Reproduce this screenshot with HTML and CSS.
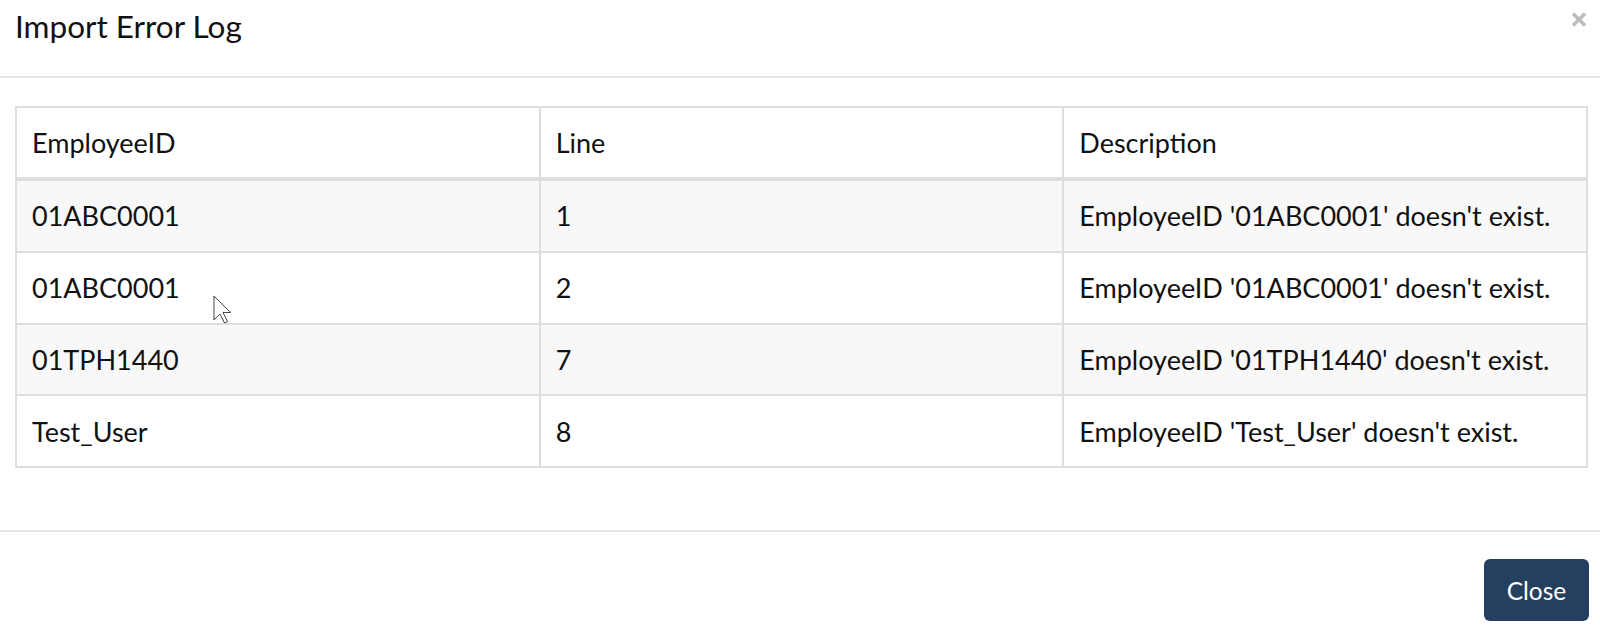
FILE: index.html
```html
<!DOCTYPE html>
<html lang="en">
<head>
<meta charset="utf-8">
<title>Import Error Log</title>
<link rel="stylesheet" href="styles.css">
</head>
<body>
<div class="modal">
  <div class="modal-header">
    <h4 class="modal-title">Import Error Log</h4>
    <button class="close" aria-label="Close">
      <svg width="16" height="15" viewBox="0 0 16 15"><path d="M2 1.5 L14 13.5 M14 1.5 L2 13.5" stroke="#bdbdbd" stroke-width="3.6" fill="none"/></svg>
    </button>
  </div>
  <div class="modal-body">
    <table class="grid">
      <colgroup><col class="c"><col class="c"><col class="c"></colgroup>
      <thead>
        <tr><th>EmployeeID</th><th>Line</th><th>Description</th></tr>
      </thead>
      <tbody>
        <tr class="odd"><td>01ABC0001</td><td>1</td><td>EmployeeID '01ABC0001' doesn't exist.</td></tr>
        <tr><td>01ABC0001</td><td>2</td><td>EmployeeID '01ABC0001' doesn't exist.</td></tr>
        <tr class="odd"><td>01TPH1440</td><td>7</td><td>EmployeeID '01TPH1440' doesn't exist.</td></tr>
        <tr><td>Test_User</td><td>8</td><td>EmployeeID 'Test_User' doesn't exist.</td></tr>
      </tbody>
    </table>
  </div>
  <div class="modal-footer">
    <button class="btn-close">Close</button>
  </div>
  <svg class="cursor" width="20" height="30" viewBox="0 0 20 30"><path d="M1 1 L1 25 L7 19 L11.5 28 L14.5 26.5 L10 17.5 L17.5 17.5 Z" fill="#fff" stroke="#444" stroke-width="1" stroke-linejoin="miter"/></svg>
</div>
</body>
</html>
```

FILE: styles.css
```css
html, body {
  margin: 0;
  padding: 0;
  background: #fff;
}
body {
  font-family: Lato, "Noto Sans", sans-serif;
  color: #111;
  width: 1600px;
  height: 644px;
  overflow: hidden;
}
.modal {
  position: relative;
  width: 1600px;
}
.modal-header {
  height: 76px;
  border-bottom: 2px solid #e5e5e5;
  display: flex;
  justify-content: space-between;
  align-items: flex-start;
  padding: 0 13px 0 15px;
}
.modal-title {
  margin: 0;
  font-size: 31.5px;
  font-weight: 400;
  line-height: 52px;
  color: #111;
}
.close {
  margin-top: 12px;
  padding: 0;
  border: 0;
  background: none;
  width: 16px;
  height: 15px;
  display: block;
}
.close svg { display: block; }
.modal-body {
  padding: 28px 12px 62px 15px;
}
.grid {
  width: 100%;
  border-collapse: collapse;
  table-layout: fixed;
  border: 2px solid #dedede;
  font-size: 27px;
}
.grid .c { width: 33.333%; }
.grid th, .grid td {
  text-align: left;
  font-weight: 400;
  padding: 0 15px;
  border: 2px solid #dedede;
  white-space: nowrap;
}
.grid th {
  height: 69px;
  border-bottom-width: 4px;
}
.grid td {
  height: 69.75px;
}
.grid tr.odd td {
  background: #f8f8f8;
}
.modal-footer {
  border-top: 2px solid #e5e5e5;
  padding: 27px 11px 0 0;
  display: flex;
  justify-content: flex-end;
}
.btn-close {
  width: 105px;
  height: 62px;
  background: #25405f;
  color: #fff;
  border: 0;
  border-radius: 6px;
  font-family: Lato, "Noto Sans", sans-serif;
  font-size: 24.5px;
  padding: 0;
}
.cursor {
  position: absolute;
  left: 213px;
  top: 295px;
}
```
